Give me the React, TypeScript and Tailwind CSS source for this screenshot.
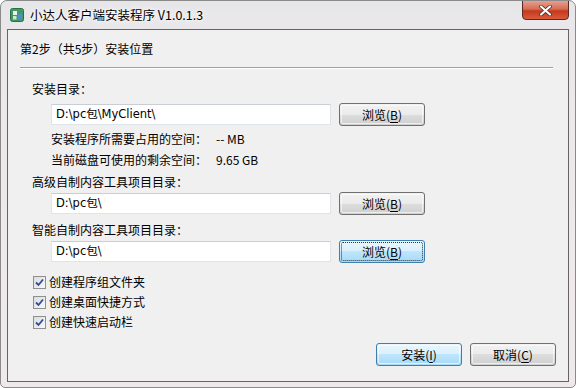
import React from 'react'

const font = { fontFamily: '"Noto Sans CJK SC", "Liberation Sans", sans-serif' }

function Mn({ text, k }: { text: string; k: string }) {
  return (
    <span>
      {text}(<span className="underline underline-offset-2">{k}</span>)
    </span>
  )
}

function Btn({ children, kind = 'normal' }: { children: React.ReactNode; kind?: 'normal' | 'default' | 'focus' }) {
  const skin =
    kind === 'normal'
      ? 'border-[#707070] bg-[linear-gradient(#f2f2f2_0%,#ebebeb_50%,#dddddd_50%,#cfcfcf_100%)]'
      : 'border-[#3c7fb1] bg-[linear-gradient(#eaf6fd_0%,#d9f0fc_50%,#bee6fd_50%,#a7d9f5_100%)]'
  return (
    <div className={`w-[86px] h-[23px] rounded-[3px] border p-[1px] ${skin}`}>
      <div
        className={`w-full h-full flex items-center justify-center text-[12px] text-black rounded-[2px] ${
          kind === 'focus' ? 'border border-dotted border-[#333]' : 'border border-white/60'
        }`}
      >
        {children}
      </div>
    </div>
  )
}

function PathRow({ value, focus }: { value: string; focus?: boolean }) {
  return (
    <div className="flex items-center gap-[8px] pl-[42px]">
      <div
        className="w-[280px] h-[21px] bg-white border border-[#dfe4ea] border-t-[#c9ced6] flex items-center pl-[4px] text-black"
        style={{ fontFamily: '"DejaVu Sans", "Noto Sans CJK SC", sans-serif', fontSize: 11.5 }}
      >
        {value}
      </div>
      <Btn kind={focus ? 'focus' : 'normal'}>
        <Mn text="浏览" k="B" />
      </Btn>
    </div>
  )
}

function Check({ label }: { label: string }) {
  return (
    <div className="flex items-center gap-[3px] h-[20px]">
      <div className="w-[13px] h-[13px] border border-[#8f8f8f] bg-[linear-gradient(135deg,#dcdcdc,#f8f8f8)] flex items-center justify-center">
        <svg width="9" height="9" viewBox="0 0 9 9">
          <path d="M1 4.5 L3.5 7 L8 1.5" fill="none" stroke="#2a4f9e" strokeWidth="1.8" />
        </svg>
      </div>
      <span className="text-[12px] text-black">{label}</span>
    </div>
  )
}

export default function App() {
  return (
    <div
      className="w-[576px] h-[388px] overflow-hidden rounded-t-[7px] rounded-b-[5px] border border-[#8a8a8a] bg-[linear-gradient(180deg,#e6e6e9_0%,#ece8ea_12%,#efe9eb_100%)] flex flex-col"
      style={font}
    >
      {/* title bar */}
      <div className="h-[28px] flex items-center relative shrink-0">
        <svg className="ml-[9px]" width="14" height="14" viewBox="0 0 14 14">
          <rect x="0.5" y="0.5" width="13" height="13" rx="2" fill="#3f9b62" stroke="#2d6d48" />
          <rect x="3" y="3" width="4" height="4" fill="#e9f3ea" />
          <rect x="7.5" y="6" width="4.5" height="5.5" fill="#4a8fd6" />
          <rect x="3" y="8" width="3.5" height="3.5" fill="#cfe6d3" />
        </svg>
        <span className="ml-[6px] text-[12.5px] text-black [text-shadow:0_0_6px_#fff,0_0_3px_#fff]">小达人客户端安装程序 V1.0.1.3</span>
        <div className="absolute right-[6px] top-[-1px] w-[47px] h-[20px] rounded-b-[4px] border border-[#5a2a22] bg-[linear-gradient(#e7a08f_0%,#d56d55_45%,#c7391b_55%,#d95a3c_100%)] flex items-center justify-center">
          <svg width="13" height="11" viewBox="0 0 13 11">
            <path d="M2 1.5 L11 9.5 M11 1.5 L2 9.5" stroke="#3a2a2a" strokeWidth="3.6" strokeLinecap="round" />
            <path d="M2 1.5 L11 9.5 M11 1.5 L2 9.5" stroke="#fff" strokeWidth="2.2" strokeLinecap="round" />
          </svg>
        </div>
      </div>

      {/* client area */}
      <div className="mx-[6px] h-[353px] border border-[#646464] bg-[#f0f0f0] flex flex-col">
        <div className="pl-[12px] pt-[11px] text-[12px] text-black leading-[16px]">第2步（共5步）安装位置</div>
        <div className="ml-[12px] mr-[15px] mt-[10px] h-[2px] border-t border-[#a0a0a0] border-b border-b-white" />

        <div className="flex flex-col pl-[1px]">
          <div className="pl-[23px] mt-[12px] text-[12px] leading-[16px]">安装目录：</div>
          <div className="mt-[6px]">
            <PathRow value="D:\pc包\MyClient\" />
          </div>
          <div className="pl-[42px] mt-[5px] flex text-[12px] leading-[16px]">
            <span className="w-[165px]">安装程序所需要占用的空间：</span>
            <span>-- MB</span>
          </div>
          <div className="pl-[42px] mt-[5px] flex text-[12px] leading-[16px]">
            <span className="w-[165px]">当前磁盘可使用的剩余空间：</span>
            <span>9.65 GB</span>
          </div>
          <div className="pl-[23px] mt-[6px] text-[12px] leading-[16px]">高级自制内容工具项目目录：</div>
          <div className="mt-[2px]">
            <PathRow value="D:\pc包\" />
          </div>
          <div className="pl-[23px] mt-[7px] text-[12px] leading-[16px]">智能自制内容工具项目目录：</div>
          <div className="mt-[2px]">
            <PathRow value="D:\pc包\" focus />
          </div>
          <div className="pl-[24px] mt-[9px] flex flex-col gap-[0px]">
            <Check label="创建程序组文件夹" />
            <Check label="创建桌面快捷方式" />
            <Check label="创建快速启动栏" />
          </div>
        </div>

        <div className="mt-auto mb-[15px] flex justify-end gap-[8px] pr-[12px]">
          <Btn kind="default">
            <Mn text="安装" k="I" />
          </Btn>
          <Btn>
            <Mn text="取消" k="C" />
          </Btn>
        </div>
      </div>
    </div>
  )
}
